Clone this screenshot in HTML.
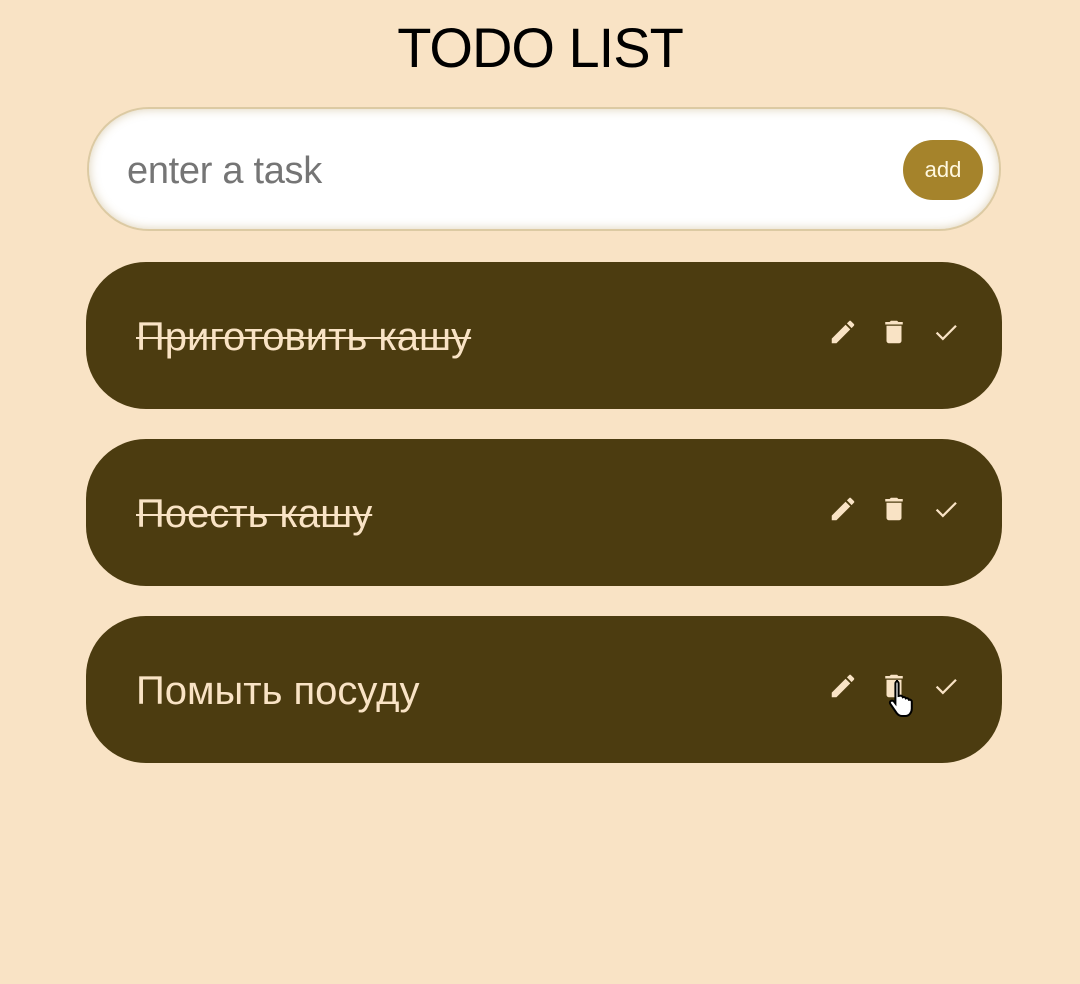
<!DOCTYPE html>
<html><head><meta charset="utf-8"><style>
html,body{margin:0;padding:0}
body{width:1080px;height:984px;background:#f9e3c5;font-family:"Liberation Sans",sans-serif;position:relative;overflow:hidden}
h1{position:absolute;top:15px;left:0;width:1080px;text-align:center;margin:0;font-weight:400;font-size:56px;color:#000;letter-spacing:-1px}
.inp{position:absolute;left:87px;top:107px;width:914px;height:124px;box-sizing:border-box;border-radius:62px;background:#fff;border:2px solid #dccaa3;box-shadow:inset 0 0 10px rgba(180,150,90,.45)}
.inp span{position:absolute;left:38px;top:41px;font-size:38px;color:#757575;letter-spacing:-0.3px}
.add{position:absolute;left:814px;top:31px;width:80px;height:60px;border-radius:30px;background:#a5832b;color:#fff8e0;font-size:22px;text-align:center;line-height:60px}
.item{position:absolute;left:86px;width:916px;height:147px;border-radius:60px;background:#4c3c10}
.item .t{position:absolute;left:50px;top:52px;font-size:40px;color:#f9e3c5;line-height:46px}
.s{text-decoration:line-through;text-decoration-thickness:2px}
.ic{position:absolute;top:55px}
</style></head><body>
<h1>TODO LIST</h1>
<div class="inp"><span>enter a task</span><div class="add">add</div></div>

<div class="item" style="top:262px"><div class="t s">Приготовить кашу</div>
<svg class="ic" style="left:742px" width="30" height="30" viewBox="0 0 24 24"><path fill="#f9e3c5" d="M3 17.25V21h3.75L17.81 9.94l-3.75-3.75L3 17.25zM20.71 7.04a1 1 0 0 0 0-1.41l-2.340-2.34a1 1 0 0 0-1.41 0l-1.83 1.83 3.75 3.75 1.83-1.83z"/></svg>
<svg class="ic" style="left:793px" width="30" height="30" viewBox="0 0 24 24"><path fill="#f9e3c5" d="M6 19c0 1.1.9 2 2 2h8c1.1 0 2-.9 2-2V7H6v12zM19 4h-3.5l-1-1h-5l-1 1H5v2h14V4z"/></svg>
<svg class="ic" style="left:845px" width="30" height="30" viewBox="0 0 24 24"><path fill="none" stroke="#f9e3c5" stroke-width="1.8" d="M4.5 12.5l5 5L20 7"/></svg>
</div>

<div class="item" style="top:439px"><div class="t s">Поесть кашу</div>
<svg class="ic" style="left:742px" width="30" height="30" viewBox="0 0 24 24"><path fill="#f9e3c5" d="M3 17.25V21h3.75L17.81 9.94l-3.75-3.75L3 17.25zM20.71 7.04a1 1 0 0 0 0-1.41l-2.34-2.34a1 1 0 0 0-1.41 0l-1.83 1.83 3.75 3.75 1.83-1.83z"/></svg>
<svg class="ic" style="left:793px" width="30" height="30" viewBox="0 0 24 24"><path fill="#f9e3c5" d="M6 19c0 1.1.9 2 2 2h8c1.1 0 2-.9 2-2V7H6v12zM19 4h-3.5l-1-1h-5l-1 1H5v2h14V4z"/></svg>
<svg class="ic" style="left:845px" width="30" height="30" viewBox="0 0 24 24"><path fill="none" stroke="#f9e3c5" stroke-width="1.8" d="M4.5 12.5l5 5L20 7"/></svg>
</div>

<div class="item" style="top:616px"><div class="t">Помыть посуду</div>
<svg class="ic" style="left:742px" width="30" height="30" viewBox="0 0 24 24"><path fill="#f9e3c5" d="M3 17.25V21h3.75L17.81 9.94l-3.75-3.75L3 17.25zM20.71 7.04a1 1 0 0 0 0-1.41l-2.34-2.34a1 1 0 0 0-1.41 0l-1.83 1.83 3.75 3.75 1.83-1.83z"/></svg>
<svg class="ic" style="left:793px" width="30" height="30" viewBox="0 0 24 24"><path fill="#f9e3c5" d="M6 19c0 1.1.9 2 2 2h8c1.1 0 2-.9 2-2V7H6v12zM19 4h-3.5l-1-1h-5l-1 1H5v2h14V4z"/></svg>
<svg class="ic" style="left:845px" width="30" height="30" viewBox="0 0 24 24"><path fill="none" stroke="#f9e3c5" stroke-width="1.8" d="M4.5 12.5l5 5L20 7"/></svg>
<svg style="position:absolute;left:800px;top:62px" width="34" height="40" viewBox="0 0 17 20"><path fill="#fff" stroke="#000" stroke-width="1" d="M5 1.5c.8 0 1.3.6 1.3 1.3V9l.6-.1c.7-.2 1.3.1 1.5.7.6-.3 1.3 0 1.5.6.6-.3 1.4 0 1.6.7.7-.2 1.4.2 1.4 1v3.5c0 1.800-1.3 3.6-3.2 3.6H8c-1.2 0-2-.6-2.7-1.5L2.2 13c-.5-.6-.2-1.4.4-1.6.5-.2 1 0 1.4.4l.7.9V2.8c0-.7.5-1.3 1.3-1.3z"/></svg>
</div>
</body></html>
